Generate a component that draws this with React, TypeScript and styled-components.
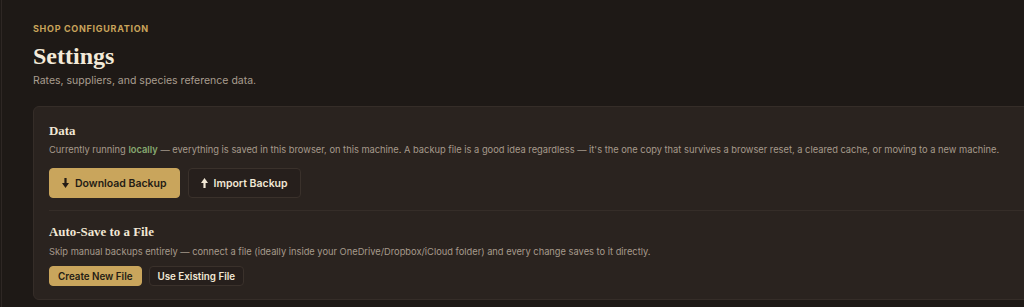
import React from "react";
import styled, { createGlobalStyle } from "styled-components";

const Global = createGlobalStyle`
  html, body { margin: 0; padding: 0; background: #1e1916; overflow: hidden; }
  * { box-sizing: border-box; }
`;

const Page = styled.main`
  margin-left: 1px;
  border-left: 1px solid #2e2724;
  min-height: 307px;
  padding: 23px 0 0 31px;
  font-family: Inter, "Open Sans", sans-serif;
  color: #efe6d6;
`;

const Eyebrow = styled.div`
  font-size: 9px;
  font-weight: 700;
  letter-spacing: 0.7px;
  color: #c9a45b;
  line-height: 12px;
  text-transform: uppercase;
`;

const Title = styled.h1`
  margin: 7px 0 0;
  font-family: "Liberation Serif", serif;
  font-weight: 700;
  font-size: 24px;
  line-height: 28px;
  color: #f3ead9;
`;

const Subtitle = styled.p`
  margin: 3px 0 0;
  font-size: 10.5px;
  line-height: 16px;
  color: #a99d8f;
`;

const Card = styled.section`
  margin-top: 17px;
  margin-right: -20px;
  background: #2a231f;
  border: 1px solid #352d28;
  border-radius: 6px;
  padding: 0 15px;
`;

const Section = styled.div<{ $divider?: boolean }>`
  padding: ${(p) => (p.$divider ? "12px 0 13px" : "15px 0 12px")};
  border-top: ${(p) => (p.$divider ? "1px solid #352d28" : "none")};
`;

const SectionTitle = styled.h2`
  margin: 0;
  font-family: "Liberation Serif", serif;
  font-weight: 700;
  font-size: 12.9px;
  line-height: 18px;
  color: #f1e7d5;
`;

const Desc = styled.p<{ $top: number }>`
  margin: ${(p) => p.$top}px 0 0;
  font-size: 9.3px;
  line-height: 16px;
  color: #a69a8c;
`;

const Green = styled.strong`
  color: #86a870;
  font-weight: 600;
`;

const Buttons = styled.div<{ $gap: number; $top: number }>`
  display: flex;
  gap: ${(p) => p.$gap}px;
  margin-top: ${(p) => p.$top}px;
`;

const Button = styled.button<{ $primary?: boolean; $size: "lg" | "sm" }>`
  display: inline-flex;
  align-items: center;
  justify-content: center;
  gap: 6px;
  height: ${(p) => (p.$size === "lg" ? 30 : 20)}px;
  padding: ${(p) => (p.$size === "lg" ? "0 12px" : "0 8px")};
  border-radius: 4px;
  font-family: Inter, "Open Sans", sans-serif;
  font-weight: 600;
  font-size: ${(p) => (p.$size === "lg" ? 10.5 : 9.8)}px;
  border: 1px solid ${(p) => (p.$primary ? "#c9a55c" : "#3a312b")};
  background: ${(p) => (p.$primary ? "#c9a55c" : "#261f1c")};
  color: ${(p) => (p.$primary ? "#241c15" : "#f1e7d5")};
  cursor: pointer;
`;

const Arrow = ({ up }: { up?: boolean }) => (
  <svg width="7" height="10" viewBox="0 0 7 10" style={{ transform: up ? "rotate(180deg)" : undefined }}>
    <rect x="2.4" y="0" width="2.2" height="6" fill="currentColor" />
    <polygon points="0,5 7,5 3.5,10" fill="currentColor" />
  </svg>
);

export default function App() {
  return (
    <>
      <Global />
      <Page>
        <Eyebrow>Shop Configuration</Eyebrow>
        <Title>Settings</Title>
        <Subtitle>Rates, suppliers, and species reference data.</Subtitle>
        <Card>
          <Section>
            <SectionTitle>Data</SectionTitle>
            <Desc $top={2}>
              Currently running <Green>locally</Green> — everything is saved in this browser, on this machine. A
              backup file is a good idea regardless — it's the one copy that survives a browser reset, a cleared
              cache, or moving to a new machine.
            </Desc>
            <Buttons $gap={8} $top={10}>
              <Button $primary $size="lg">
                <Arrow /> Download Backup
              </Button>
              <Button $size="lg">
                <Arrow up /> Import Backup
              </Button>
            </Buttons>
          </Section>
          <Section $divider>
            <SectionTitle>Auto-Save to a File</SectionTitle>
            <Desc $top={3}>
              Skip manual backups entirely — connect a file (ideally inside your OneDrive/Dropbox/iCloud folder) and
              every change saves to it directly.
            </Desc>
            <Buttons $gap={7} $top={6}>
              <Button $primary $size="sm">Create New File</Button>
              <Button $size="sm">Use Existing File</Button>
            </Buttons>
          </Section>
        </Card>
      </Page>
    </>
  );
}
